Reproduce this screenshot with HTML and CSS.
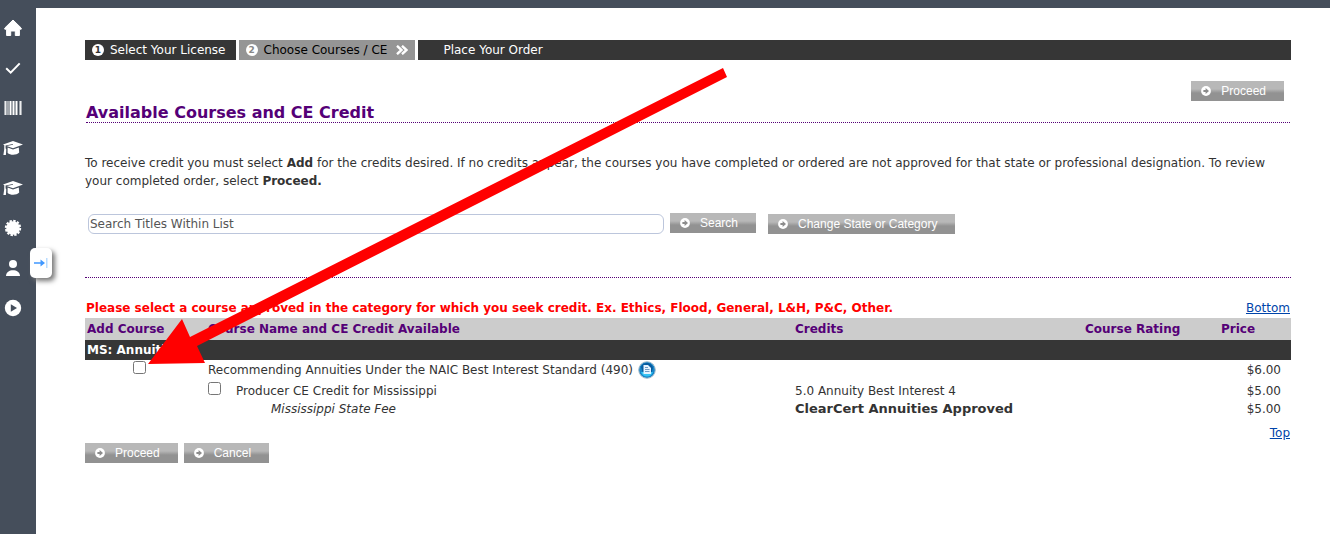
FILE: index.html
```html
<!DOCTYPE html>
<html lang="en">
<head>
<meta charset="utf-8">
<title>Available Courses and CE Credit</title>
<link rel="stylesheet" href="styles.css">
</head>
<body>
<svg class="defs" aria-hidden="true">
  <symbol id="cap" viewBox="0 0 20 16">
    <path d="M10 1 20 4.600 10 8.200 3.600 6 10 4.700 9.800 3.900 2.600 5.500V8.200L3.300 9.500 2.900 15H.4L1.200 9.500 1.300 5.200 0 4.600Z"/>
    <path d="M4.600 7.600 10 9.600 15.800 7.500 16.200 12.600C13.500 15.500 7.200 15.500 4.600 13Z"/>
  </symbol>
  <symbol id="go" viewBox="0 0 10 10">
    <circle cx="5" cy="5" r="4.900" fill="#fff"/>
    <path d="M2.400 4H4.600V2L8 5 4.600 8V6H2.400Z" fill="#8c8c8c"/>
  </symbol>
</svg>
<div class="app">
  <nav class="rail" aria-label="Main">
    <a href="#" aria-label="Home"><svg viewBox="0 0 20 18"><path d="M10 1 18.200 9V10.200H16.400V16.500H12.300V12H7.700V16.500H3.600V10.200H1.800V9Z" stroke="#fff" stroke-linejoin="round"/></svg></a>
    <a href="#" aria-label="Completed"><svg viewBox="0 0 20 18"><path d="M3.200 9.300 7.700 13.600 16.700 4.400" fill="none" stroke="#fff" stroke-width="2"/></svg></a>
    <a href="#" aria-label="Codes"><svg viewBox="0 0 20 18"><path d="M2 2H18V16H2Z" opacity=".5"/><path d="M1.500 2h1.300v14H1.500ZM7 2h1v14H7ZM10 2h1v14h-1ZM13 2h1v14h-1ZM17.200 2h1.300v14h-1.300Z"/><path d="M15 2h1v14h-1Z" fill="#454e5b"/></svg></a>
    <a href="#" aria-label="Courses"><svg viewBox="0 0 20 16"><use href="#cap"/></svg></a>
    <a href="#" aria-label="Education"><svg viewBox="0 0 20 16"><use href="#cap"/></svg></a>
    <a href="#" aria-label="Credentials"><svg viewBox="0 0 18 18"><circle cx="9" cy="9" r="6.800"/><circle cx="9" cy="9" r="7.200" fill="none" stroke="#fff" stroke-width="2" stroke-dasharray="2.400 1.370"/></svg></a>
    <a href="#" aria-label="Account"><svg viewBox="0 0 18 18"><circle cx="9" cy="5" r="4"/><path d="M2 17C2 9.200 16 9.200 16 17Z"/></svg></a>
    <a href="#" aria-label="Play"><svg viewBox="0 0 18 18"><circle cx="9" cy="9" r="8.200"/><path d="M6.800 5.200 13 9 6.800 12.800Z" fill="#454e5b"/></svg></a>
    <button class="expand" aria-label="Expand menu"><svg viewBox="0 0 14 12"><path d="M0 5.200H6.500V2.500L11 6 6.500 9.500V6.800H0Z" fill="#4098ff"/><path d="M12 1h1.500v10H12Z" fill="#b9dcff"/></svg></button>
  </nav>
  <main class="page">
    <ol class="steps">
      <li class="step"><span class="num">1</span>Select Your License</li>
      <li class="step current"><span class="num">2</span>Choose Courses / CE<svg class="chev" viewBox="0 0 12 10"><path d="M1 .8 5.500 5 1 9.200M6 .8 10.500 5 6 9.200" fill="none" stroke="#fff" stroke-width="2.400"/></svg></li>
      <li class="step last">Place Your Order</li>
    </ol>
    <div class="actions-top"><button class="btn"><svg><use href="#go"/></svg>Proceed</button></div>
    <h1 class="title">Available Courses and CE Credit</h1>
    <p class="intro">To receive credit you must select <b>Add</b> for the credits desired. If no credits appear, the courses you have completed or ordered are not approved for that state or professional designation. To review your completed order, select <b>Proceed.</b></p>
    <form class="search">
      <input class="field" type="text" aria-label="Search titles" placeholder="Search Titles Within List">
      <button class="btn find" type="button"><svg><use href="#go"/></svg>Search</button>
      <button class="btn change" type="button"><svg><use href="#go"/></svg>Change State or Category</button>
    </form>
    <div class="notice"><strong>Please select a course approved in the category for which you seek credit. Ex. Ethics, Flood, General, L&amp;H, P&amp;C, Other.</strong><a href="#bottom">Bottom</a></div>
    <table class="courses">
      <colgroup><col class="c-add"><col><col class="c-credits"><col class="c-rating"><col class="c-price"></colgroup>
      <thead><tr><th>Add Course</th><th>Course Name and CE Credit Available</th><th>Credits</th><th>Course Rating</th><th>Price</th></tr></thead>
      <tbody>
        <tr class="group"><th colspan="5">MS: Annuities</th></tr>
        <tr class="course"><td class="add"><input type="checkbox" id="course"></td><td><div class="name"><label for="course">Recommending Annuities Under the NAIC Best Interest Standard (490)</label><svg class="doc" viewBox="0 0 18 18" role="img" aria-label="Details"><circle cx="9" cy="9" r="8.300" fill="#1685c8" stroke="#a8bccb"/><path d="M3 6C5 0 14 1 15 7L13 13 5 12Z" fill="#075b9f"/><path d="M3 11C5 17 13 17 15 11Z" fill="#35c3f3"/><path d="M5.500 4H10L13 7V13H5.500Z" fill="#e5f3ff"/><path d="M7 6.500H10M7 8.500H11.500M7 10.500H11.500" stroke="#709bc4"/></svg></div></td><td></td><td></td><td class="price">$6.00</td></tr>
        <tr><td></td><td><div class="credit"><input type="checkbox" id="credit"><label for="credit">Producer CE Credit for Mississippi</label></div></td><td>5.0 Annuity Best Interest 4</td><td></td><td class="price">$5.00</td></tr>
        <tr class="fee"><td></td><td class="state-fee">Mississippi State Fee</td><td class="approved">ClearCert Annuities Approved</td><td></td><td class="price">$5.00</td></tr>
      </tbody>
    </table>
    <div class="to-top"><a href="#top">Top</a></div>
    <div class="actions" id="bottom"><button class="btn"><svg><use href="#go"/></svg>Proceed</button><button class="btn"><svg><use href="#go"/></svg>Cancel</button></div>
  </main>
  <svg class="pointer" viewBox="0 0 580 298" aria-hidden="true"><path d="M575 0 579 9 49 278 57 295 0 296 34 251 42 269Z" fill="red"/></svg>
</div>
</body>
</html>
```
FILE: styles.css
```css
* { box-sizing: border-box; }
body { margin: 0; background: #fff; color: #333; font: 12px/18px Verdana, "DejaVu Sans", sans-serif; }
button, input { font: inherit; margin: 0; }
a { color: #04a; }
.defs { position: absolute; width: 0; height: 0; }
.app { position: relative; display: flex; min-height: 100vh; border-top: 8px solid #454e5b; }
.rail { position: relative; flex: 0 0 36px; background: #454e5b; }
.rail a { display: flex; align-items: center; width: 25px; height: 40px; justify-content: center; }
.rail a svg { width: 20px; height: 18px; fill: #fff; }
.expand { position: absolute; top: 240px; left: 30px; width: 22px; height: 30px; padding: 0; border: 0; border-radius: 5px; background: #fff; box-shadow: 3px 3px 5px #777; display: flex; align-items: center; justify-content: center; }
.expand svg { width: 14px; height: 12px; }
.page { flex: 1; min-width: 0; padding: 32px 39px 32px 49px; }
.steps { display: flex; gap: 3px; margin: 0; padding: 0; list-style: none; line-height: 20px; color: #fff; }
.step { display: flex; align-items: center; gap: 6px; padding: 0 10px 0 7px; background: #363636; }
.current { background: #959595; color: #000; padding-right: 7px; }
.last { flex: 1; padding-left: 25px; }
.num { width: 12px; height: 12px; border-radius: 50%; background: #fff; color: #333; font: bold 9px/12px "DejaVu Sans", sans-serif; text-align: center; }
.current .num { color: #888; }
.chev { width: 12px; height: 10px; margin-left: 3px; }
.actions-top { display: flex; justify-content: flex-end; padding: 21px 7px 0 0; }
.btn { display: inline-flex; align-items: center; height: 20px; padding: 0 18px 0 10px; border: 0; border-radius: 0; color: #fff; font: 12px/20px "Liberation Sans", Arial, sans-serif; background: linear-gradient(#b8b8b8 0 40%, #929292 60% 100%); white-space: nowrap; }
.btn svg { width: 10px; height: 10px; margin-right: 10px; }
.title { margin: 3px 1px 0; border-bottom: 1px dotted #507; color: #507; font-size: 16px; line-height: 18px; }
.intro { margin: 31px 0 0; }
.search { display: flex; align-items: flex-end; padding: 23px 0 43px 3px; border-bottom: 1px dotted #507; }
.field { width: 576px; height: 20px; margin-right: 6px; padding: 0 1px; border: 1px solid #bcc6dc; border-radius: 6px; background: #fff; }
.field::placeholder { color: #555; opacity: 1; }
.find { margin-bottom: 1px; }
.change { margin-left: 12px; }
.notice { display: flex; justify-content: space-between; padding: 21px 1px 1px; }
.notice strong { color: red; }
.courses { width: 100%; table-layout: fixed; border-collapse: collapse; }
.c-add { width: 122px; }
.c-credits { width: 290px; }
.c-rating { width: 136px; }
.c-price { width: 71px; }
.courses th { height: 22px; padding: 0 0 0 2px; text-align: left; background: #ccc; color: #507; }
.courses th + th { padding-left: 1px; }
.courses .group th { height: 20px; background: #363636; color: #fff; }
.courses td { height: 21px; padding: 0 0 0 1px; white-space: nowrap; }
.courses .course td { height: 20px; }
.courses .fee td { height: 17px; padding-bottom: 1px; line-height: 16px; }
.courses .add { text-align: center; vertical-align: top; padding: 1px 0 0; line-height: 13px; }
.courses input { width: 13px; height: 13px; }
.courses .add input { margin-left: -13px; vertical-align: top; }
.name { display: flex; align-items: center; gap: 5px; }
.doc { width: 18px; height: 18px; }
.credit { display: flex; align-items: flex-start; gap: 15px; }
.courses .state-fee { padding-left: 64px; font-style: italic; }
.courses .approved { font-size: 13px; font-weight: bold; vertical-align: top; line-height: 14px; }
.courses .price { padding-right: 10px; text-align: right; }
.to-top { padding: 6px 1px 0; text-align: right; }
.actions { display: flex; gap: 6px; padding-top: 1px; }
.pointer { position: absolute; left: 148px; top: 60px; width: 580px; height: 298px; pointer-events: none; }
```
